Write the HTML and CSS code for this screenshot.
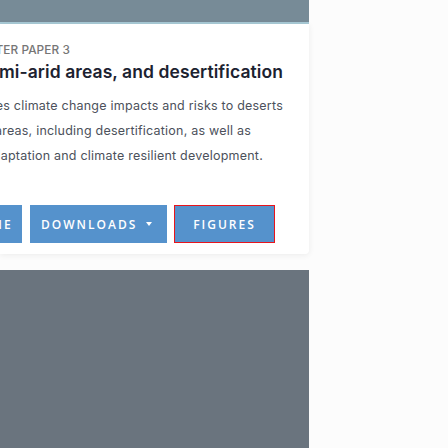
FILE: index.html
```html
<!DOCTYPE html>
<html lang="en">
<head>
<meta charset="utf-8">
<title>Cross-Chapter Paper 3</title>
<link rel="stylesheet" href="styles.css">
</head>
<body>
<div class="page">
  <div class="topbar"></div>
  <section class="card">
    <div class="clip">
      <div class="line label"><span>CROSS-CHAPTER PAPER 3</span></div>
      <div class="line title"><span>Deserts, semi-arid areas, and desertification</span></div>
      <div class="para">
        <div class="line p1"><span>This chapter assesses climate change impacts and risks to deserts</span></div>
        <div class="line p2"><span>and semi-arid areas, including desertification, as well as</span></div>
        <div class="line p3"><span>adaptation and climate resilient development.</span></div>
      </div>
      <div class="actions">
        <a class="btn btn-read">READ ONLINE</a>
        <a class="btn btn-downloads">DOWNLOADS <span class="caret"></span></a>
        <a class="btn btn-figures">FIGURES</a>
      </div>
    </div>
  </section>
  <div class="panel"></div>
</div>
</body>
</html>
```
FILE: styles.css
```css
html, body {
  margin: 0;
  padding: 0;
  background: #fcfcfc;
  height: 100%;
  overflow: hidden;
}
.page {
  width: 309px;
  font-family: Inter, "Liberation Sans", sans-serif;
}
.topbar {
  height: 22px;
  background: #778b97;
  border-bottom: 2px solid #a8cad6;
}
.card {
  background: #fff;
  border-radius: 0 0 4px 0;
  box-shadow: 0 1px 6px rgba(0, 0, 0, 0.07);
}
.clip {
  overflow: hidden;
  padding: 18px 0 11px;
}
.line {
  display: flex;
  justify-content: flex-end;
  white-space: nowrap;
}
.line span { flex: none; }
.label {
  font-size: 11.8px;
  line-height: 16px;
  font-weight: 500;
  letter-spacing: 0.1px;
  color: #767676;
  padding-right: 239px;
}
.title {
  margin-top: 2px;
  font-size: 17.5px;
  line-height: 24px;
  font-weight: 600;
  letter-spacing: 0.08px;
  color: #1c2230;
  padding-right: 26px;
}
.para {
  margin-top: 9px;
  font-size: 12.5px;
  line-height: 25px;
  letter-spacing: 0.22px;
  color: #4c515b;
}
.p1 { padding-right: 26px; }
.p2 { padding-right: 58px; }
.p3 { padding-right: 46px; }
.actions {
  margin-top: 37px;
  display: flex;
  justify-content: flex-end;
  gap: 7px;
  padding-right: 34px;
}
.btn {
  flex: none;
  box-sizing: border-box;
  height: 38px;
  display: flex;
  align-items: center;
  justify-content: center;
  background: #5592cc;
  color: #fff;
  font-family: "Open Sans", "Liberation Sans", sans-serif;
  font-size: 12px;
  font-weight: 600;
  letter-spacing: 2px;
  text-decoration: none;
}
.btn-read { width: 120px; margin-right: 1px; }
.btn-downloads { width: 137px; justify-content: flex-start; padding-left: 11px; }
.btn-figures { width: 101px; border: 1px solid #e8141c; }
.caret {
  display: inline-block;
  width: 0;
  height: 0;
  margin-left: 9px;
  border-left: 3.5px solid transparent;
  border-right: 3.5px solid transparent;
  border-top: 4px solid #fff;
}
.panel {
  margin-top: 16px;
  height: 200px;
  background: #6a747e;
}
```
